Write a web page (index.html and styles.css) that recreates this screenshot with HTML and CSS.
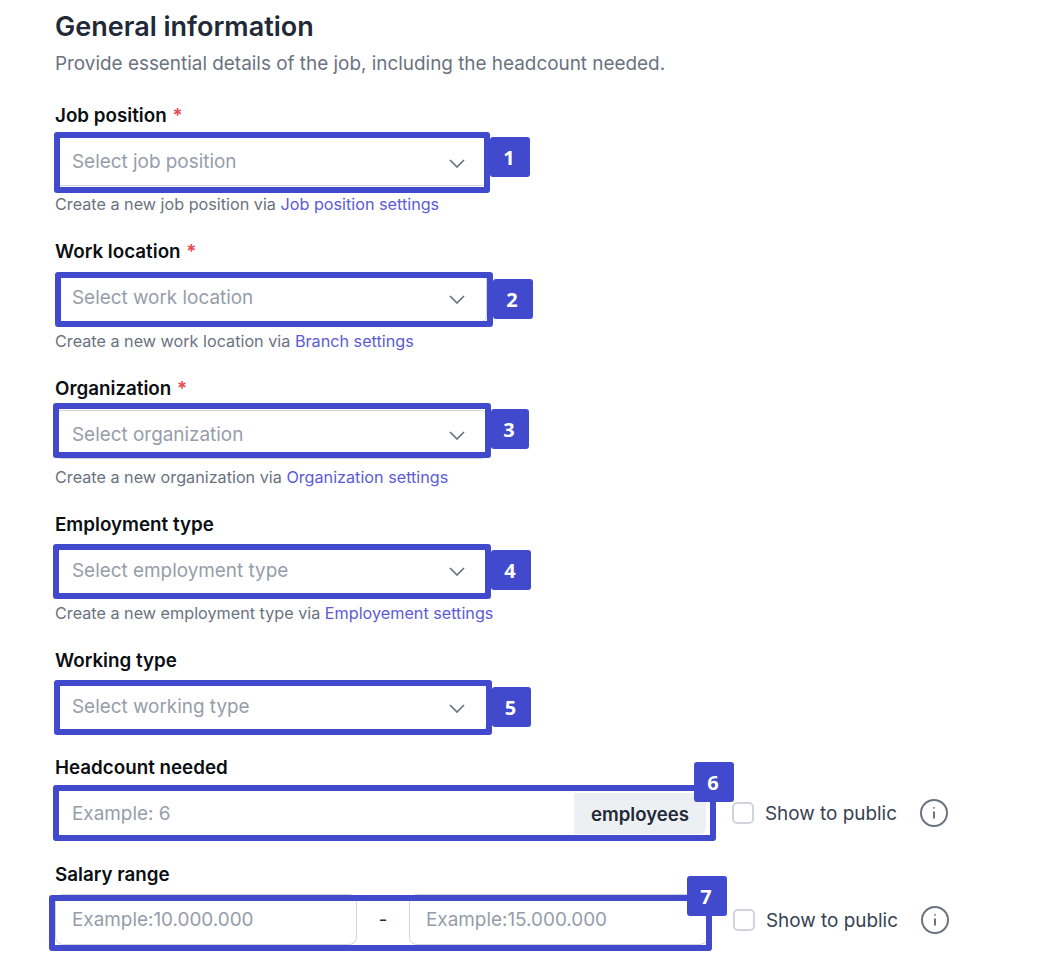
FILE: index.html
```html
<!DOCTYPE html>
<html lang="en">
<head>
    <meta charset="UTF-8">
    <meta name="viewport" content="width=device-width, initial-scale=1.0">
    <title>General information</title>
    <link rel="stylesheet" href="styles.css">
</head>
<body>
    <div class="page">
        <h1>General information</h1>
        <p class="intro">Provide essential details of the job, including the headcount needed.</p>

        <div class="field">
            <label class="label">Job position <span class="req">*</span></label>
            <div class="select">
                <span>Select job position</span>
                <svg class="chevron" viewBox="0 0 16 9"><path d="M1 1l7 7 7-7"/></svg>
            </div>
            <p class="hint">Create a new job position via <a href="#">Job position settings</a></p>
        </div>

        <div class="field">
            <label class="label">Work location <span class="req">*</span></label>
            <div class="select">
                <span>Select work location</span>
                <svg class="chevron" viewBox="0 0 16 9"><path d="M1 1l7 7 7-7"/></svg>
            </div>
            <p class="hint">Create a new work location via <a href="#">Branch settings</a></p>
        </div>

        <div class="field">
            <label class="label">Organization <span class="req">*</span></label>
            <div class="select">
                <span>Select organization</span>
                <svg class="chevron" viewBox="0 0 16 9"><path d="M1 1l7 7 7-7"/></svg>
            </div>
            <p class="hint">Create a new organization via <a href="#">Organization settings</a></p>
        </div>

        <div class="field">
            <label class="label">Employment type</label>
            <div class="select">
                <span>Select employment type</span>
                <svg class="chevron" viewBox="0 0 16 9"><path d="M1 1l7 7 7-7"/></svg>
            </div>
            <p class="hint">Create a new employment type via <a href="#">Employement settings</a></p>
        </div>

        <div class="field">
            <label class="label">Working type</label>
            <div class="select">
                <span>Select working type</span>
                <svg class="chevron" viewBox="0 0 16 9"><path d="M1 1l7 7 7-7"/></svg>
            </div>
        </div>

        <div class="field field-row">
            <label class="label">Headcount needed</label>
            <div class="row">
                <div class="input-group">
                    <input type="text" placeholder="Example: 6">
                    <span class="addon">employees</span>
                </div>
                <label class="public"><span class="checkbox"></span>Show to public</label>
                <svg class="info" viewBox="0 0 28 28">
                    <circle cx="14" cy="14" r="13"/>
                    <path d="M14 12.5v7M14 8.2v1.4"/>
                </svg>
            </div>
        </div>

        <div class="field field-row">
            <label class="label">Salary range</label>
            <div class="row">
                <div class="range">
                    <input class="range-input" type="text" placeholder="Example:10.000.000">
                    <span class="dash">-</span>
                    <input class="range-input" type="text" placeholder="Example:15.000.000">
                </div>
                <label class="public"><span class="checkbox"></span>Show to public</label>
                <svg class="info" viewBox="0 0 28 28">
                    <circle cx="14" cy="14" r="13"/>
                    <path d="M14 12.5v7M14 8.2v1.4"/>
                </svg>
            </div>
        </div>

        <!-- numbered callouts drawn over the form -->
        <div class="mark mark-1"><span class="badge">1</span></div>
        <div class="mark mark-2"><span class="badge">2</span></div>
        <div class="mark mark-3"><span class="badge">3</span></div>
        <div class="mark mark-4"><span class="badge">4</span></div>
        <div class="mark mark-5"><span class="badge">5</span></div>
        <div class="mark mark-6"><span class="badge">6</span></div>
        <div class="mark mark-7"><span class="badge">7</span></div>
    </div>
</body>
</html>
```

FILE: styles.css
```css
* {
    box-sizing: border-box;
}

body {
    margin: 0;
    background: #fff;
    font-family: 'Inter', 'Liberation Sans', sans-serif;
}

.page {
    position: relative;
    height: 961px;
    padding: 9px 0 0 55px;
    overflow: hidden;
}

h1 {
    margin: 0;
    height: 36px;
    font-size: 27px;
    line-height: 36px;
    font-weight: 600;
    color: #1f2937;
}

.intro {
    margin: 7px 0 0;
    height: 24px;
    font-size: 18.9px;
    line-height: 24px;
    color: #6b7280;
}

.field {
    margin-top: 26px;
}

.intro + .field {
    margin-top: 28px;
}

.field-row {
    margin-top: 25px;
}

.label {
    display: block;
    height: 24px;
    margin-bottom: 9px;
    font-size: 18.8px;
    line-height: 24px;
    font-weight: 600;
    color: #0b0f14;
}

.field-row .label {
    margin-bottom: 8px;
}

.req {
    color: #e5484d;
    margin-left: 1px;
}

.select {
    display: flex;
    align-items: center;
    justify-content: space-between;
    width: 432px;
    height: 49px;
    padding: 0 21px 0 16px;
    border: 1px solid #d1d5db;
    border-radius: 6px;
    font-size: 18.9px;
    color: #969da9;
}

.chevron {
    width: 16px;
    height: 9px;
    margin-top: 3px;
    fill: none;
    stroke: #6b7280;
    stroke-width: 1.7;
}

.hint {
    margin: 8.33px 0 0;
    height: 20px;
    font-size: 16.2px;
    line-height: 20px;
    color: #6b7280;
}

.hint a {
    color: #5b5bd6;
    text-decoration: none;
}

.row {
    display: flex;
    align-items: center;
}

.input-group {
    display: flex;
    width: 652px;
    height: 50px;
    padding: 4px 0 3px 0;
    border: 1px solid #d1d5db;
    border-right-color: transparent;
    border-radius: 6px;
    margin-right: 25px;
}

input {
    border: none;
    outline: none;
    padding: 0 0 0 16px;
    font-family: inherit;
    font-size: 18.9px;
    color: #111;
    background: transparent;
}

input::placeholder {
    color: #969da9;
    opacity: 1;
}

.input-group input {
    flex: 1;
    min-width: 0;
}

.addon {
    width: 132px;
    display: flex;
    align-items: center;
    justify-content: center;
    background: #edf0f3;
    border-radius: 0 0 6px 0;
    font-size: 18.6px;
    font-weight: 600;
    color: #1f2937;
}

.range {
    display: flex;
    align-items: center;
    width: 653px;
    height: 51px;
    margin-top: -1px;
    margin-right: 25px;
}

.range-input {
    width: 302px;
    height: 100%;
    border: 1px solid #d1d5db;
    border-radius: 8px;
}

.range .range-input:last-child {
    width: 299px;
}

.dash {
    width: 52px;
    text-align: center;
    font-size: 18.8px;
    color: #1f2937;
}

.public {
    display: flex;
    align-items: center;
    width: 188px;
    font-size: 18.9px;
    color: #374151;
}

.checkbox {
    width: 22px;
    height: 22px;
    margin-right: 11px;
    border: 2px solid #d1d5db;
    border-radius: 5px;
}

.info {
    width: 28px;
    height: 28px;
    fill: none;
    stroke: #6b7280;
    stroke-width: 2;
}

.mark {
    position: absolute;
    border: 6px solid #4149cc;
    border-radius: 3px;
}

.badge {
    position: absolute;
    display: flex;
    align-items: center;
    justify-content: center;
    width: 40px;
    height: 40px;
    padding-right: 2px;
    background: #4149cc;
    border-radius: 3px;
    font-family: 'Open Sans', sans-serif;
    font-size: 20px;
    font-weight: 700;
    color: #fff;
}

.mark-1 { left: 54px; top: 132px; width: 436px; height: 61px; }
.mark-2 { left: 55px; top: 272px; width: 438px; height: 55px; }
.mark-3 { left: 53px; top: 403px; width: 438px; height: 55px; }
.mark-4 { left: 53px; top: 544px; width: 438px; height: 55px; }
.mark-5 { left: 54px; top: 680px; width: 438px; height: 55px; }
.mark-6 { left: 53px; top: 785px; width: 663px; height: 56px; }
.mark-7 { left: 49px; top: 895px; width: 663px; height: 56px; }

.mark-1 .badge { left: 430px; top: -1px; }
.mark-2 .badge { left: 432px; top: 1px; }
.mark-3 .badge { left: 432px; top: 0; width: 38px; }
.mark-4 .badge { left: 432px; top: 0; }
.mark-5 .badge { left: 432px; top: 1px; width: 39px; }
.mark-6 .badge { left: 635px; top: -29px; }
.mark-7 .badge { left: 632px; top: -25px; }
```
